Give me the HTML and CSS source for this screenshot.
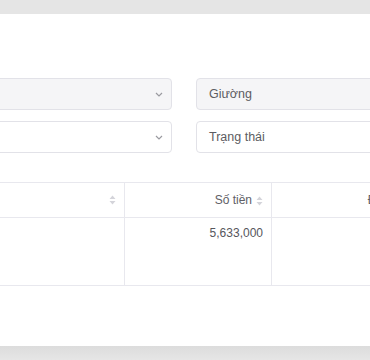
FILE: index.html
```html
<html>
<head>
    <title>Hóa đơn</title>
    <link rel="stylesheet" href="styles.css">
</head>
<body>
    <div class="topbar"></div>
    <div class="panel">
        <div class="filters">
            <div class="field disabled">
                <span class="value"></span>
                <svg class="chevron" width="8" height="5" viewBox="0 0 8 5"><path d="M1 1l3 3 3-3" fill="none" stroke="#9a9aa0" stroke-width="1.2"/></svg>
            </div>
            <div class="field disabled"><span class="value">Giường</span></div>
            <div class="field">
                <span class="value"></span>
                <svg class="chevron" width="8" height="5" viewBox="0 0 8 5"><path d="M1 1l3 3 3-3" fill="none" stroke="#9a9aa0" stroke-width="1.2"/></svg>
            </div>
            <div class="field"><span class="value">Trạng thái</span></div>
        </div>
        <table class="grid">
            <colgroup>
                <col class="col-name">
                <col class="col-money">
                <col class="col-paid">
            </colgroup>
            <tr>
                <th><span class="sort"><svg width="7" height="10" viewBox="0 0 7 10"><path d="M3.5 0.5L6.5 4H0.5z M3.5 9.5L6.5 6H0.5z" fill="#d4d4da"/></svg></span></th>
                <th>Số tiền<span class="sort"><svg width="7" height="10" viewBox="0 0 7 10"><path d="M3.5 0.5L6.5 4H0.5z M3.5 9.5L6.5 6H0.5z" fill="#d4d4da"/></svg></span></th>
                <th>Đã thu<span class="sort"><svg width="7" height="10" viewBox="0 0 7 10"><path d="M3.5 0.5L6.5 4H0.5z M3.5 9.5L6.5 6H0.5z" fill="#d4d4da"/></svg></span></th>
            </tr>
            <tr>
                <td></td>
                <td>5,633,000</td>
                <td></td>
            </tr>
        </table>
    </div>
    <div class="bottombar"></div>
</body>
</html>
```
FILE: styles.css
```css
body {
    margin: 0;
    background: #e4e4e4;
    font-family: "Liberation Sans", Arial, sans-serif;
    font-size: 12px;
    color: #555;
    overflow: hidden;
}
.topbar {
    height: 14px;
    background: #e5e5e5;
}
.panel {
    background: white;
    height: 332px;
    padding-top: 64px;
    box-sizing: border-box;
}
.filters {
    display: grid;
    grid-template-columns: 272px 272px;
    column-gap: 24px;
    row-gap: 11px;
    margin-left: -100px;
}
.field {
    display: flex;
    align-items: center;
    height: 32px;
    box-sizing: border-box;
    border: 1px solid #e2e2e8;
    border-radius: 4px;
    padding: 0 8px 0 12px;
    background: white;
    font-size: 12.5px;
    color: #5c5c62;
}
.field.disabled {
    background: #f5f5f7;
}
.chevron {
    margin-left: auto;
}
.grid {
    border-collapse: collapse;
    margin-left: -100px;
    margin-top: 29px;
    table-layout: fixed;
    width: 522px;
    font-size: 12px;
    font-family: "Liberation Sans", Arial, sans-serif;
}
.col-name {
    width: 224px;
}
.col-money {
    width: 147px;
}
.col-paid {
    width: 151px;
}
.grid th, .grid td {
    border: 1px solid #e8e8ee;
    text-align: right;
    padding: 0 8px;
    line-height: 14px;
}
.grid th {
    height: 35px;
    font-weight: normal;
    color: #606066;
}
.grid td {
    height: 68px;
    vertical-align: top;
    padding-top: 8px;
    color: #56565c;
}
.sort {
    display: inline-block;
    vertical-align: middle;
    margin-left: 4px;
    line-height: 0;
}
.bottombar {
    height: 14px;
    background: linear-gradient(#dcdcdc, #e6e6e6);
}
```
